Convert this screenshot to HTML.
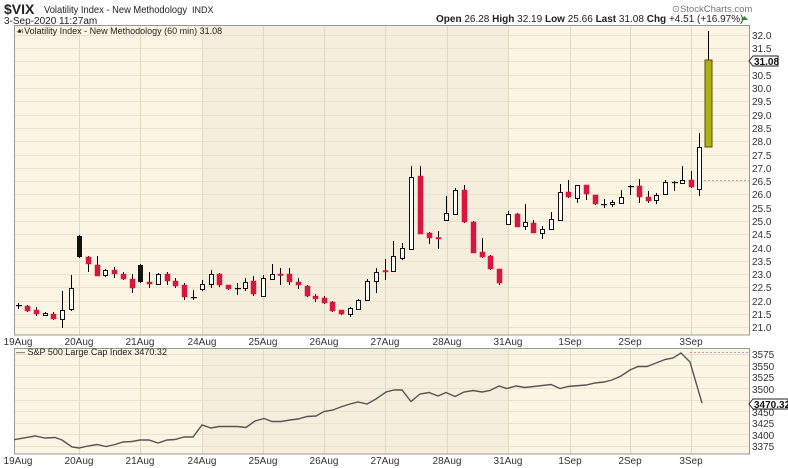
<!DOCTYPE html>
<html><head><meta charset="utf-8"><style>
html,body{margin:0;padding:0;background:#fff;}
svg{display:block;font-family:"Liberation Sans",Arial,sans-serif;}
</style></head><body>
<svg width="788" height="468" viewBox="0 0 788 468" xmlns="http://www.w3.org/2000/svg">
<rect width="788" height="468" fill="#fff"/>
<!-- header -->
<text x="4" y="14" font-size="14" font-weight="bold" fill="#222">$VIX</text>
<text x="44" y="13" font-size="10.5" fill="#222" textLength="143" lengthAdjust="spacingAndGlyphs">Volatility Index - New Methodology</text>
<text x="192" y="13" font-size="9" fill="#222">INDX</text>
<text x="4" y="24" font-size="10" fill="#222">3-Sep-2020 11:27am</text>
<text x="672" y="12" font-size="9.5" fill="#777">⊙StockCharts.com</text>
<text x="436" y="22" font-size="10" fill="#222"><tspan font-weight="bold">Open</tspan> 26.28 <tspan font-weight="bold">High</tspan> 32.19 <tspan font-weight="bold">Low</tspan> 25.66 <tspan font-weight="bold">Last</tspan> 31.08 <tspan font-weight="bold">Chg</tspan> +4.51 (+16.97%)</text>
<path d="M741 20 L744.5 16 L748 20Z" fill="#2a8a2a"/>

<!-- main panel -->
<rect x="14" y="25" width="736" height="310" fill="#fcf5e3"/>
<rect x="203" y="25" width="305" height="310" fill="#f6eedd"/>
<g stroke="#ece2cb" stroke-width="1">
<path d="M14 35.5H750M14 48.5H750M14 61.5H750M14 75.5H750M14 88.5H750M14 101.5H750M14 115.5H750M14 128.5H750M14 141.5H750M14 155.5H750M14 168.5H750M14 181.5H750M14 194.5H750M14 208.5H750M14 221.5H750M14 234.5H750M14 248.5H750M14 261.5H750M14 274.5H750M14 287.5H750M14 301.5H750M14 314.5H750M14 327.5H750"/>
<path d="M79.5 25V335M140.5 25V335M202.5 25V335M263.5 25V335M324.5 25V335M385.5 25V335M447.5 25V335M508.5 25V335M570.5 25V335M630.5 25V335M691.5 25V335" stroke="#e2d8c2"/>
</g>
<rect x="14.5" y="25.5" width="735" height="309.5" fill="none" stroke="#999"/>
<text x="16" y="34" font-size="9" fill="#222">☙Volatility Index - New Methodology (60 min) 31.08</text>
<path d="M700 180.5H750" stroke="#aaa" stroke-dasharray="2,2"/>

<g stroke="#000" stroke-width="1" id="c">
<path d="M18.5 303V309M27.5 305V312M36.5 307V316M45.5 312V316M53.5 312V320M62.5 291V328M71.5 275V311M79.5 235V258M88.5 256V272M97.5 256V276M105.5 269V277M114.5 267V278M123.5 272V280M132.5 274V293M140.5 264V283M149.5 272V288M158.5 273V285M167.5 272V285M175.5 278V288M184.5 283V300M193.5 290V300M202.5 280V291M211.5 270V288M219.5 273V287M228.5 285V290M237.5 283V295M245.5 278V291M253.5 276V296M263.5 275V297M272.5 264V280M280.5 268V285M289.5 268V285M298.5 278V289M307.5 285V297M315.5 294V302M324.5 296V304M332.5 301V312M341.5 310V315M350.5 307V317M358.5 299V310M367.5 279V301M376.5 268V293M385.5 259V280M393.5 241V272M402.5 243V260M411.5 166V249M420.5 166V234M429.5 232V244M438.5 231V249M446.5 196V220M455.5 188V214M464.5 185V223M473.5 221V253M482.5 238V258M490.5 255V270M499.5 269V285M508.5 211V225M517.5 213V227M525.5 204V230M533.5 220V233M542.5 226V239M551.5 212V230M560.5 184V220M568.5 180V198M577.5 185V203M586.5 185V200M595.5 195V205M604.5 199V208M612.5 200V207M621.5 190V203M630.5 185V195M639.5 179V203M648.5 191V203M656.5 193V204M665.5 180V195M674.5 181V191M682.5 166V184M691.5 171V188M699.5 133V196M708.5 31V60"/>
</g>
<g fill="#d9163e" stroke="#d9163e" stroke-width="0.5">
<rect x="25" y="306" width="5" height="5"/><rect x="34" y="310" width="5" height="4"/><rect x="51" y="314" width="5" height="5"/>
<rect x="86" y="257" width="5" height="7"/><rect x="95" y="265" width="5" height="11"/><rect x="112" y="270" width="5" height="4"/><rect x="121" y="274" width="5" height="5"/><rect x="130" y="279" width="5" height="9"/>
<rect x="147" y="282" width="5" height="2"/><rect x="165" y="274" width="5" height="7"/><rect x="173" y="281" width="5" height="5"/><rect x="182" y="285" width="5" height="12"/>
<rect x="217" y="274" width="5" height="11"/><rect x="226" y="285" width="5" height="4"/><rect x="251" y="281" width="5" height="13"/>
<rect x="278" y="274" width="5" height="1.5"/><rect x="287" y="274" width="5" height="8"/><rect x="296" y="282" width="5" height="3"/><rect x="305" y="286" width="5" height="10"/><rect x="313" y="296" width="5" height="3"/><rect x="322" y="298" width="5" height="5"/><rect x="330" y="302" width="5" height="9"/><rect x="339" y="310" width="5" height="4"/>
<rect x="383" y="270.5" width="5" height="1.5"/>
<rect x="418" y="176" width="5" height="58"/><rect x="427" y="233" width="5" height="5"/><rect x="436" y="237.5" width="5" height="1.5"/>
<rect x="462" y="190" width="5" height="32"/><rect x="471" y="222" width="5" height="31"/><rect x="480" y="252" width="5" height="5"/><rect x="488" y="256" width="5" height="13"/><rect x="497" y="269" width="5" height="14"/>
<rect x="515" y="214" width="5" height="13"/><rect x="531" y="223" width="5" height="10"/><rect x="566" y="192" width="5" height="5"/><rect x="584" y="185" width="5" height="9"/><rect x="593" y="195" width="5" height="9"/>
<rect x="637" y="186" width="5" height="11"/><rect x="646" y="197" width="5" height="4"/><rect x="689" y="180" width="5" height="7"/>
</g>
<g fill="#111">
<rect x="77" y="236" width="5" height="21"/><rect x="138" y="265" width="5" height="17"/>
<rect x="16" y="305" width="6" height="1.2"/><rect x="191" y="297" width="6" height="1.2"/><rect x="235" y="288" width="6" height="1.2"/><rect x="601" y="204" width="6" height="1.2"/><rect x="628" y="186" width="6" height="1.2"/><rect x="672" y="182" width="6" height="1.2"/>
</g>
<g fill="#fff" stroke="#111" stroke-width="1">
<rect x="43.5" y="313.5" width="4" height="2"/><rect x="60.5" y="310.5" width="4" height="9"/><rect x="69.5" y="288.5" width="4" height="21"/><rect x="103.5" y="270.5" width="4" height="5"/><rect x="156.5" y="274.5" width="4" height="10"/>
<rect x="200.5" y="284.5" width="4" height="5"/><rect x="209.5" y="274.5" width="4" height="10"/><rect x="243.5" y="282.5" width="4" height="6"/><rect x="261.5" y="278.5" width="4" height="18"/><rect x="270.5" y="274.5" width="4" height="5"/>
<rect x="348.5" y="308.5" width="4" height="6"/><rect x="356.5" y="300.5" width="4" height="9"/><rect x="365.5" y="281.5" width="4" height="19"/><rect x="374.5" y="272.5" width="4" height="9"/><rect x="391.5" y="256.5" width="4" height="15"/><rect x="400.5" y="248.5" width="4" height="10"/><rect x="409.5" y="177.5" width="4" height="72"/>
<rect x="444.5" y="213.5" width="4" height="7"/><rect x="453.5" y="190.5" width="4" height="24"/>
<rect x="506.5" y="214.5" width="4" height="10"/><rect x="523.5" y="222.5" width="4" height="4"/><rect x="540.5" y="229.5" width="4" height="4"/><rect x="549.5" y="219.5" width="4" height="10"/><rect x="558.5" y="192.5" width="4" height="28"/><rect x="575.5" y="185.5" width="4" height="13"/>
<rect x="610.5" y="202.5" width="4" height="2"/><rect x="619.5" y="197.5" width="4" height="6"/><rect x="654.5" y="195.5" width="4" height="5"/><rect x="663.5" y="182.5" width="4" height="12"/><rect x="680.5" y="180.5" width="4" height="3"/><rect x="697.5" y="147.5" width="4" height="42"/>
</g>
<rect x="705" y="60" width="7" height="87" fill="#b5ad14" stroke="#555000" stroke-width="1"/>

<g font-size="10" fill="#333">
<text x="752" y="39">32.0</text><text x="752" y="52">31.5</text><text x="752" y="79">30.5</text><text x="752" y="92">30.0</text><text x="752" y="105">29.5</text><text x="752" y="119">29.0</text><text x="752" y="132">28.5</text><text x="752" y="145">28.0</text><text x="752" y="159">27.5</text><text x="752" y="172">27.0</text><text x="752" y="185">26.5</text><text x="752" y="198">26.0</text><text x="752" y="212">25.5</text><text x="752" y="225">25.0</text><text x="752" y="238">24.5</text><text x="752" y="252">24.0</text><text x="752" y="265">23.5</text><text x="752" y="278">23.0</text><text x="752" y="291">22.5</text><text x="752" y="305">22.0</text><text x="752" y="318">21.5</text><text x="752" y="331">21.0</text>
</g>
<path d="M749 61 L753 56 H778 V66 H753Z" fill="#fff" stroke="#222"/>
<text x="754" y="65" font-size="10" font-weight="bold" fill="#111">31.08</text>

<g font-size="10" fill="#333" text-anchor="middle">
<text x="18" y="345">19Aug</text><text x="79" y="345">20Aug</text><text x="140" y="345">21Aug</text><text x="202" y="345">24Aug</text><text x="263" y="345">25Aug</text><text x="324" y="345">26Aug</text><text x="385" y="345">27Aug</text><text x="447" y="345">28Aug</text><text x="508" y="345">31Aug</text><text x="570" y="345">1Sep</text><text x="630" y="345">2Sep</text><text x="691" y="345">3Sep</text>
<text x="18" y="464">19Aug</text><text x="79" y="464">20Aug</text><text x="140" y="464">21Aug</text><text x="202" y="464">24Aug</text><text x="263" y="464">25Aug</text><text x="324" y="464">26Aug</text><text x="385" y="464">27Aug</text><text x="447" y="464">28Aug</text><text x="508" y="464">31Aug</text><text x="570" y="464">1Sep</text><text x="630" y="464">2Sep</text><text x="691" y="464">3Sep</text>
</g>

<rect x="14" y="348" width="736" height="106" fill="#fcf5e3"/>
<rect x="203" y="348" width="305" height="106" fill="#f6eedd"/>
<g stroke="#ece2cb">
<path d="M14 354.5H750M14 365.5H750M14 377.5H750M14 388.5H750M14 400.5H750M14 411.5H750M14 423.5H750M14 434.5H750M14 446.5H750"/>
<path d="M79.5 348V454M140.5 348V454M202.5 348V454M263.5 348V454M324.5 348V454M385.5 348V454M447.5 348V454M508.5 348V454M570.5 348V454M630.5 348V454M691.5 348V454" stroke="#e2d8c2"/>
</g>
<rect x="14.5" y="348.5" width="735" height="105.5" fill="none" stroke="#999"/>
<text x="16" y="355" font-size="9" fill="#222">— S&amp;P 500 Large Cap Index 3470.32</text>
<path d="M690 352.5H750" stroke="#c9a" stroke-dasharray="2,2"/>
<polyline fill="none" stroke="#555" stroke-width="1.4" points="14,439.7 35,436 45,438 55,437.5 62,440 72,447 79,448 88,446 97,444.5 106,446.5 115,444.5 123,442 132,441.5 140,440 149,440 158,443 167,440 175,439.5 184,437 193,437 202,425 211,428 219,426.5 237,426.5 246,427.5 255,421 264,418.5 272,421.5 281,421.5 290,420 298,419 307,416.5 316,416 324,411.5 333,410 342,406.5 350,404 358,402 367,404 376,399 386,392 394,390 402,390 411,401.5 420,394 429,392.5 438,396 446,392.5 455,396.5 464,392 473,390.5 482,392 490,390.5 499,386 507,388.5 516,386 525,387.5 551,384.5 560,388.5 568,386.5 586,385 595,383 604,382 612,380 621,376 630,370 638,366.5 647,366.5 656,363 665,359.5 673,358 681,353 690,362 702,403"/>
<g font-size="10" fill="#333">
<text x="752" y="358">3575</text><text x="752" y="370">3550</text><text x="752" y="381">3525</text><text x="752" y="393">3500</text><text x="752" y="416">3450</text><text x="752" y="427">3425</text><text x="752" y="439">3400</text><text x="752" y="450">3375</text>
</g>
<path d="M749 404 L753 399 H788 V409 H753Z" fill="#fff" stroke="#222"/>
<text x="754" y="408" font-size="10" font-weight="bold" fill="#111">3470.32</text>
</svg>
</body></html>
